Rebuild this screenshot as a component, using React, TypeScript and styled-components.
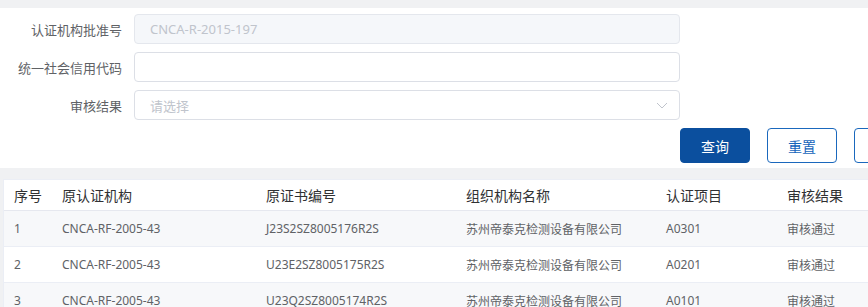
import React from "react";
import styled, { createGlobalStyle } from "styled-components";

const GlobalStyle = createGlobalStyle`
  html, body {
    margin: 0;
    padding: 0;
    background: #f0f1f3;
    overflow: hidden;
    font-family: "Noto Sans", "Noto Sans CJK SC", sans-serif;
  }
  * { box-sizing: border-box; }
`;

const Page = styled.div`
  width: 868px;
  height: 307px;
  padding-top: 8px;
  overflow: hidden;
`;

const FormCard = styled.div`
  background: #fff;
  padding: 6px 0 5px;
  display: flex;
  flex-direction: column;
  gap: 8px;
`;

const FormRow = styled.div`
  display: grid;
  grid-template-columns: 122px 546px;
  column-gap: 12px;
  align-items: center;
  height: 30px;
`;

const Label = styled.label`
  text-align: right;
  font-size: 13px;
  color: #606266;
  white-space: nowrap;
`;

const Input = styled.div<{ $disabled?: boolean; $placeholder?: boolean }>`
  height: 30px;
  border: 1px solid ${(p) => (p.$disabled ? "#e4e7ed" : "#dcdfe6")};
  background: ${(p) => (p.$disabled ? "#f5f7fa" : "#fff")};
  border-radius: 4px;
  padding: 0 15px;
  display: flex;
  align-items: center;
  justify-content: space-between;
  font-size: 13px;
  color: ${(p) => (p.$disabled || p.$placeholder ? "#c0c4cc" : "#606266")};
`;

const Arrow = styled.svg`
  width: 12px;
  height: 12px;
  margin-right: -4px;
`;

const ButtonRow = styled.div`
  display: flex;
  gap: 17px;
  padding-left: 680px;
`;

const Button = styled.button<{ $primary?: boolean }>`
  flex: none;
  width: 70px;
  height: 35px;
  border-radius: 4px;
  font-family: inherit;
  font-size: 14px;
  cursor: pointer;
  border: 1px solid ${(p) => (p.$primary ? "#0b4f9e" : "#1a68bd")};
  background: ${(p) => (p.$primary ? "#0b4f9e" : "#fff")};
  color: ${(p) => (p.$primary ? "#fff" : "#1565bb")};
`;

const TableCard = styled.div`
  margin: 11px 0 0 3px;
  background: #fff;
  border-top: 1px solid #ebeef5;
  border-left: 1px solid #ebeef5;
  width: 900px;
`;

const Row = styled.div<{ $header?: boolean; $striped?: boolean }>`
  display: grid;
  grid-template-columns: 48px 204px 200px 200px 121px 1fr;
  height: ${(p) => (p.$header ? "31px" : "36px")};
  border-bottom: 1px solid ${(p) => (p.$header ? "#e6e8ef" : "#ebeef5")};
  background: ${(p) => (p.$striped ? "#f7f8fa" : "#fff")};
  align-items: center;
  font-size: ${(p) => (p.$header ? "14px" : "12px")};
  color: ${(p) => (p.$header ? "#303133" : "#606266")};
`;

const Cell = styled.div`
  padding-left: 10px;
  white-space: nowrap;
  overflow: hidden;
`;

const columns = ["序号", "原认证机构", "原证书编号", "组织机构名称", "认证项目", "审核结果"];

const rows = [
  ["1", "CNCA-RF-2005-43", "J23S2SZ8005176R2S", "苏州帝泰克检测设备有限公司", "A0301", "审核通过"],
  ["2", "CNCA-RF-2005-43", "U23E2SZ8005175R2S", "苏州帝泰克检测设备有限公司", "A0201", "审核通过"],
  ["3", "CNCA-RF-2005-43", "U23Q2SZ8005174R2S", "苏州帝泰克检测设备有限公司", "A0101", "审核通过"],
];

export default function App() {
  return (
    <Page>
      <GlobalStyle />
      <FormCard>
        <FormRow>
          <Label>认证机构批准号</Label>
          <Input $disabled>CNCA-R-2015-197</Input>
        </FormRow>
        <FormRow>
          <Label>统一社会信用代码</Label>
          <Input />
        </FormRow>
        <FormRow>
          <Label>审核结果</Label>
          <Input $placeholder>
            请选择
            <Arrow viewBox="0 0 12 12" fill="none" stroke="#c0c4cc" strokeWidth="1">
              <path d="M1 4l5 5 5-5" />
            </Arrow>
          </Input>
        </FormRow>
        <ButtonRow>
          <Button $primary>查询</Button>
          <Button>重置</Button>
          <Button>导出</Button>
        </ButtonRow>
      </FormCard>
      <TableCard>
        <Row $header>
          {columns.map((c) => (
            <Cell key={c}>{c}</Cell>
          ))}
        </Row>
        {rows.map((r, i) => (
          <Row key={i} $striped={i % 2 === 0}>
            {r.map((v, j) => (
              <Cell key={j}>{v}</Cell>
            ))}
          </Row>
        ))}
      </TableCard>
    </Page>
  );
}
